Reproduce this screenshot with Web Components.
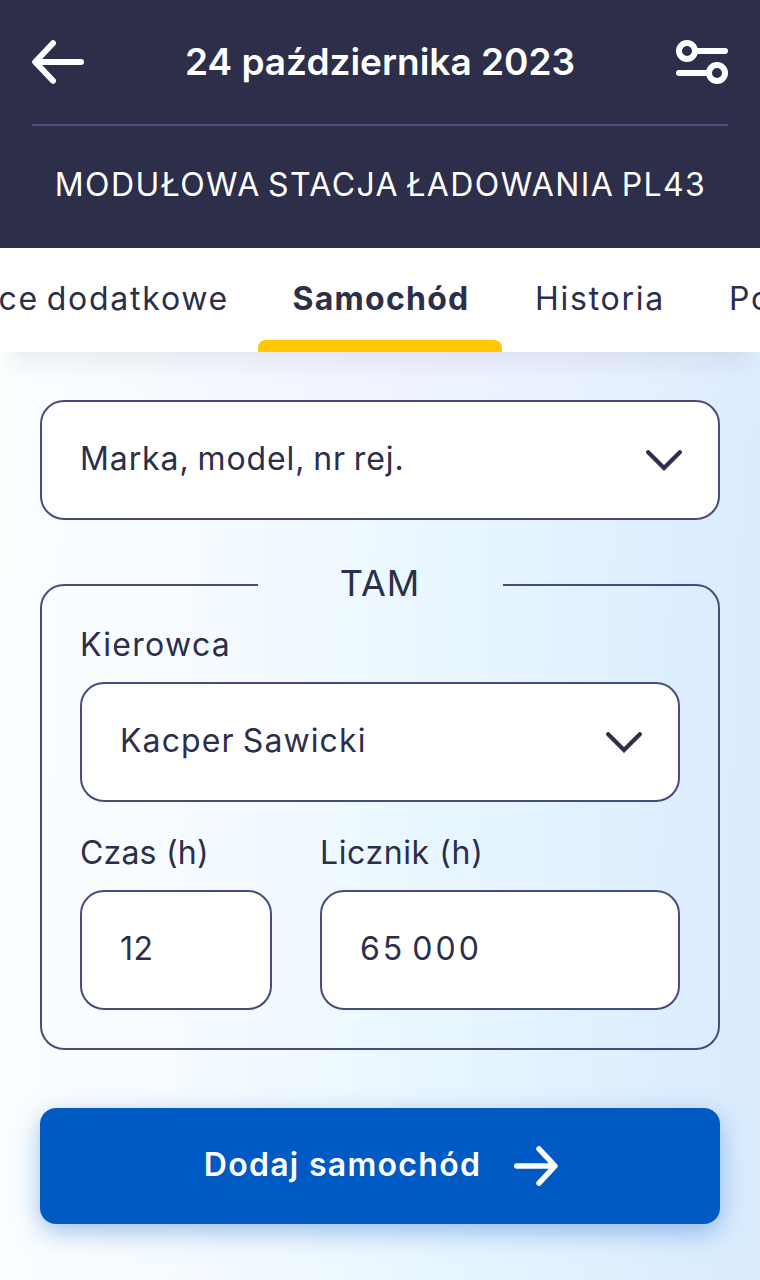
<!DOCTYPE html>
<html lang="pl">
<head>
<meta charset="utf-8">
<meta name="viewport" content="width=device-width">
<title>Samochód</title>
<style>
  body {
    margin: 0;
    font-family: Inter, "Noto Sans", sans-serif;
    font-size: 32px;
    color: #2c2e4a;
  }
</style>
</head>
<body>
<station-app></station-app>

<script>
class AppIcon extends HTMLElement {
  constructor() {
    super();
    this.attachShadow({ mode: "open" });
  }

  static get shapes() {
    return {
      back: [52, 44, 6, `<path d="M21 3.2 3.2 22 21 40.8M4 22H49" stroke-linejoin="round"/>`],
      filters: [52, 44, 6, `<circle cx="11" cy="11" r="8"/><path d="M19 11H49M3 33H33"/><circle cx="41" cy="33" r="8"/>`],
      chevron: [36, 21, 4.2, `<path d="M2.2 2.2 18 18 33.8 2.2"/>`],
      forward: [44, 40, 5.4, `<path d="M25 2.8 41 20 25 37.2M2.7 20H40" stroke-linejoin="round"/>`]
    };
  }

  connectedCallback() {
    const [width, height, stroke, shape] = AppIcon.shapes[this.getAttribute("name")];
    this.shadowRoot.innerHTML = /* html */`
    <style>
      :host { display: block; flex: none; }
      svg { display: block; }
    </style>
    <svg width="${width}" height="${height}" viewBox="0 0 ${width} ${height}" fill="none"
      stroke="currentColor" stroke-width="${stroke}" stroke-linecap="round">${shape}</svg>`;
  }
}

class AppHeader extends HTMLElement {
  constructor() {
    super();
    this.attachShadow({ mode: "open" });
  }

  static get styles() {
    return /* css */`
      :host {
        display: block;
        height: 248px;
        padding: 0 32px;
        box-sizing: border-box;
        background: #2c2e4a;
        color: #fff;
      }

      .bar {
        height: 124px;
        display: flex;
        align-items: center;
        justify-content: space-between;
        border-bottom: 2px solid #4b4b7e;
      }

      .date {
        font-size: 37px;
        font-weight: 600;
        padding-bottom: 2px;
      }

      .place {
        height: 117px;
        display: flex;
        align-items: center;
        justify-content: center;
        white-space: nowrap;
        letter-spacing: 1.4px;
        word-spacing: -3px;
        text-indent: 1px;
      }
    `;
  }

  connectedCallback() {
    this.shadowRoot.innerHTML = /* html */`
    <style>${AppHeader.styles}</style>
    <div class="bar">
      <app-icon name="back"></app-icon>
      <div class="date"><slot name="date"></slot></div>
      <app-icon name="filters"></app-icon>
    </div>
    <div class="place"><slot></slot></div>`;
  }
}

class TabBar extends HTMLElement {
  constructor() {
    super();
    this.attachShadow({ mode: "open" });
  }

  connectedCallback() {
    this.shadowRoot.innerHTML = /* html */`
    <style>
      :host {
        display: grid;
        grid-template-columns: 258px 244px 194px 64px;
        height: 104px;
        overflow: hidden;
        background: #fff;
      }
    </style>
    <slot></slot>`;
  }
}

class TabItem extends HTMLElement {
  constructor() {
    super();
    this.attachShadow({ mode: "open" });
  }

  static get styles() {
    return /* css */`
      :host {
        display: flex;
        flex-direction: column;
        white-space: nowrap;
        min-width: 0;
        letter-spacing: 1.75px;
        word-spacing: -3px;
      }

      .label {
        height: 92px;
        line-height: 102px;
        padding: 0 29px 0 33px;
      }

      :host([align="end"]) .label {
        align-self: flex-end;
      }

      :host([active]) {
        font-weight: 700;
        letter-spacing: 1.25px;
      }

      :host([active]) .label {
        align-self: center;
        padding: 0 0 0 2px;
      }

      :host([active])::after {
        content: "";
        height: 12px;
        border-radius: 8px 8px 0 0;
        background: #ffc800;
      }
    `;
  }

  connectedCallback() {
    this.shadowRoot.innerHTML = /* html */`
    <style>${TabItem.styles}</style>
    <div class="label"><slot></slot></div>`;
  }
}

class FormField extends HTMLElement {
  constructor() {
    super();
    this.attachShadow({ mode: "open" });
  }

  static get styles() {
    return /* css */`
      :host {
        display: block;
      }

      .label {
        line-height: 40px;
        padding-top: 1px;
        margin-bottom: 17px;
        white-space: nowrap;
        letter-spacing: var(--label-spacing, 0);
      }

      .box {
        height: 120px;
        box-sizing: border-box;
        display: flex;
        align-items: center;
        justify-content: space-between;
        padding: 0 36px 0 38px;
        border: 2px solid #4b4b7a;
        border-radius: 24px;
        background: #fff;
      }

      .value {
        padding-bottom: 3px;
        white-space: nowrap;
        letter-spacing: var(--value-spacing, 0);
        word-spacing: var(--value-word-spacing, 0);
      }
    `;
  }

  connectedCallback() {
    const label = this.getAttribute("label");
    this.shadowRoot.innerHTML = /* html */`
    <style>${FormField.styles}</style>
    ${label ? `<div class="label">${label}</div>` : ""}
    <div class="box">
      <div class="value"><slot></slot></div>
      ${this.hasAttribute("select") ? `<app-icon name="chevron"></app-icon>` : ""}
    </div>`;
  }
}

class FieldGroup extends HTMLElement {
  constructor() {
    super();
    this.attachShadow({ mode: "open" });
  }

  static get styles() {
    return /* css */`
      :host {
        display: block;
      }

      fieldset {
        margin: 0;
        padding: 16px 38px 38px;
        border: 2px solid #4b4b7a;
        border-radius: 24px;
      }

      legend {
        width: 245px;
        box-sizing: border-box;
        margin: 0 auto;
        padding: 0 0 4px;
        line-height: 42px;
        font-size: 36px;
        letter-spacing: 1px;
        text-align: center;
      }
    `;
  }

  connectedCallback() {
    this.shadowRoot.innerHTML = /* html */`
    <style>${FieldGroup.styles}</style>
    <fieldset>
      <legend>${this.getAttribute("legend")}</legend>
      <slot></slot>
    </fieldset>`;
  }
}

class ActionButton extends HTMLElement {
  constructor() {
    super();
    this.attachShadow({ mode: "open" });
  }

  static get styles() {
    return /* css */`
      :host {
        display: block;
      }

      button {
        width: 100%;
        height: 116px;
        display: flex;
        align-items: center;
        justify-content: center;
        gap: 33px;
        padding: 0 0 0 2px;
        border: 0;
        border-radius: 16px;
        background: #005ac3;
        box-shadow: 0 8px 26px rgba(0, 90, 195, 0.36);
        color: #fff;
        font: inherit;
        font-weight: 600;
        letter-spacing: 1.3px;
      }

      span {
        padding-bottom: 3px;
      }
    `;
  }

  connectedCallback() {
    this.shadowRoot.innerHTML = /* html */`
    <style>${ActionButton.styles}</style>
    <button type="button"><span><slot></slot></span><app-icon name="forward"></app-icon></button>`;
  }
}

class StationApp extends HTMLElement {
  constructor() {
    super();
    this.attachShadow({ mode: "open" });
  }

  static get styles() {
    return /* css */`
      :host {
        display: flex;
        flex-direction: column;
        height: 1280px;
        overflow: hidden;
      }

      tab-bar {
        flex: none;
      }

      main {
        flex: 1;
        padding: 48px 40px 0;
        background:
          radial-gradient(ellipse 400px 150px at 60% 0, rgba(243, 239, 255, 0.6), rgba(243, 239, 255, 0)),
          linear-gradient(92deg, #fbfeff 2%, #f7fcff 20%, #f0f9ff 42%, #e8f6ff 58%, #e1f1ff 76%, #dcedfe 90%, #d9ebfd 100%);
      }

      /* soft edge that the tab bar casts on the form */
      .shade {
        height: 28px;
        margin: -48px -40px 20px;
        background: linear-gradient(rgba(30, 30, 30, 0.06), rgba(30, 30, 30, 0));
        -webkit-mask-image: linear-gradient(90deg, transparent, #000 24px, #000 736px, transparent);
        mask-image: linear-gradient(90deg, transparent, #000 24px, #000 736px, transparent);
      }

      .car { --value-spacing: 0.9px; --value-word-spacing: -2px; }
      .driver { --label-spacing: 1.3px; --value-spacing: 1.1px; --value-word-spacing: -2px; }
      .time { --label-spacing: 0.2px; --value-spacing: 0.5px; }
      .meter { --label-spacing: 0.6px; --value-spacing: 3px; --value-word-spacing: -5px; }

      field-group {
        margin-top: 42px;
      }

      .row {
        display: grid;
        grid-template-columns: 192px 360px;
        gap: 48px;
        margin-top: 30px;
      }

      action-button {
        margin-top: 58px;
      }
    `;
  }

  connectedCallback() {
    this.shadowRoot.innerHTML = /* html */`
    <style>${StationApp.styles}</style>
    <app-header><span slot="date">24 października 2023</span>MODUŁOWA STACJA ŁADOWANIA PL43</app-header>
    <tab-bar>
      <tab-item align="end">ce dodatkowe</tab-item>
      <tab-item active>Samochód</tab-item>
      <tab-item>Historia</tab-item>
      <tab-item>Po</tab-item>
    </tab-bar>
    <main>
      <div class="shade"></div>
      <form-field class="car" select>Marka, model, nr rej.</form-field>
      <field-group legend="TAM">
        <form-field class="driver" label="Kierowca" select>Kacper Sawicki</form-field>
        <div class="row">
          <form-field class="time" label="Czas (h)">12</form-field>
          <form-field class="meter" label="Licznik (h)">65 000</form-field>
        </div>
      </field-group>
      <action-button>Dodaj samochód</action-button>
    </main>`;
  }
}

customElements.define("app-icon", AppIcon);
customElements.define("app-header", AppHeader);
customElements.define("tab-bar", TabBar);
customElements.define("tab-item", TabItem);
customElements.define("form-field", FormField);
customElements.define("field-group", FieldGroup);
customElements.define("action-button", ActionButton);
customElements.define("station-app", StationApp);
</script>
</body>
</html>
